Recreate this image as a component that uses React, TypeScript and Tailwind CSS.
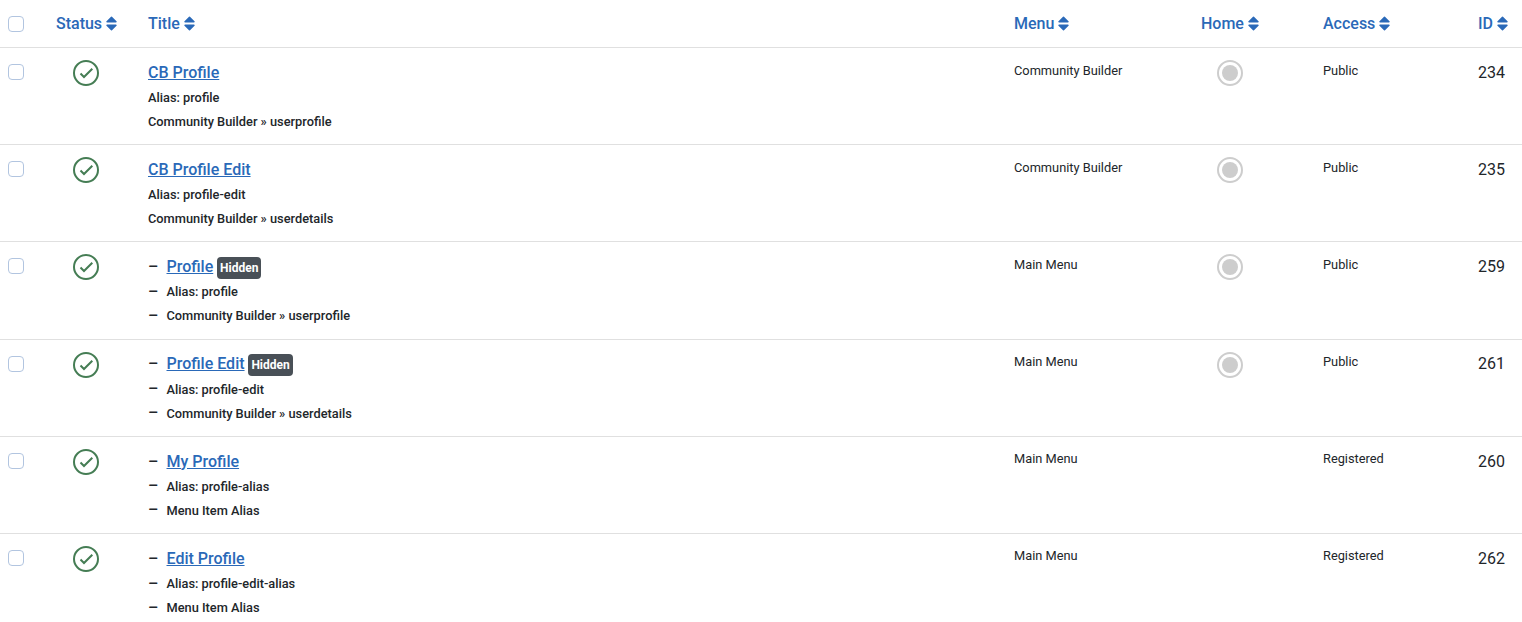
const rows = [
  { id: 234, title: "CB Profile", alias: "profile", type: "Community Builder » userprofile", menu: "Community Builder", access: "Public", home: true, child: false, hidden: false },
  { id: 235, title: "CB Profile Edit", alias: "profile-edit", type: "Community Builder » userdetails", menu: "Community Builder", access: "Public", home: true, child: false, hidden: false },
  { id: 259, title: "Profile", alias: "profile", type: "Community Builder » userprofile", menu: "Main Menu", access: "Public", home: true, child: true, hidden: true },
  { id: 261, title: "Profile Edit", alias: "profile-edit", type: "Community Builder » userdetails", menu: "Main Menu", access: "Public", home: true, child: true, hidden: true },
  { id: 260, title: "My Profile", alias: "profile-alias", type: "Menu Item Alias", menu: "Main Menu", access: "Registered", home: false, child: true, hidden: false },
  { id: 262, title: "Edit Profile", alias: "profile-edit-alias", type: "Menu Item Alias", menu: "Main Menu", access: "Registered", home: false, child: true, hidden: false },
];

function SortIcon() {
  return (
    <svg viewBox="0 0 11 15" className="ml-[4px] inline-block h-[15px] w-[11px] align-[-2px]" fill="#2a69b8">
      <path d="M1 6.5h9a.7.7 0 0 0 .5-1.2L6 .8a.7.7 0 0 0-1 0L.5 5.3A.7.7 0 0 0 1 6.5z" />
      <path d="M1 8.5h9a.7.7 0 0 1 .5 1.2L6 14.2a.7.7 0 0 1-1 0L.5 9.7A.7.7 0 0 1 1 8.5z" />
    </svg>
  );
}

function Checkbox() {
  return <div className="h-4 w-4 rounded-[4px] border border-[#b2c5e0] bg-white" />;
}

function StatusIcon() {
  return (
    <svg viewBox="0 0 26 26" className="h-[26px] w-[26px]" fill="none" stroke="#457d54">
      <circle cx="13" cy="13" r="12" strokeWidth="2" />
      <path d="M7.5 13.5L11 17l8.3-8.3" strokeWidth="2" />
    </svg>
  );
}

function HomeIcon() {
  return (
    <div className="flex h-[26px] w-[26px] items-center justify-center rounded-full border-2 border-[#cdcdcd]">
      <div className="h-4 w-4 rounded-full bg-[#cdcdcd]" />
    </div>
  );
}

function Dash() {
  return <span className="inline-block w-[18.5px] text-base leading-none font-medium">–</span>;
}

function Header({ label, className }: { label: string; className?: string }) {
  return (
    <th className={`h-[48px] border-b border-[#e0e0e0] px-2 text-left align-middle text-base font-medium text-[#2a69b8] ${className ?? ""}`}>
      {label}
      <SortIcon />
    </th>
  );
}

export default function App() {
  return (
    <div className="bg-white font-['Roboto',sans-serif] text-[#22262a]">
      <table className="w-full table-fixed border-separate border-spacing-0">
        <thead>
          <tr>
            <th className="w-[48px] border-b border-[#e0e0e0] pl-2 text-left align-middle">
              <Checkbox />
            </th>
            <Header label="Status" className="w-[92px]" />
            <Header label="Title" className="w-[866px]" />
            <Header label="Menu" className="w-[187px]" />
            <Header label="Home" className="w-[122px]" />
            <Header label="Access" className="w-[130px]" />
            <Header label="ID" className="pr-[14px] text-right" />
          </tr>
        </thead>
        <tbody>
          {rows.map((r, i) => {
            const line = i < rows.length - 1 ? "border-b border-[#e0e0e0]" : "";
            return (
              <tr key={r.id}>
                <td className={`pl-2 pt-4 align-top ${line}`}>
                  <Checkbox />
                </td>
                <td className={`px-2 pt-3 align-top ${line}`}>
                  <div className="w-[60px]">
                    <div className="mx-auto w-[26px]">
                      <StatusIcon />
                    </div>
                  </div>
                </td>
                <td className={`px-2 pt-3 align-top ${line}`}>
                  <div className="h-[84.1875px] pt-[0.8px]">
                    <div className="mb-[0.8px] flex h-6 items-center text-base font-medium">
                      {r.child && <Dash />}
                      <a className="text-[#2a69b8] underline">{r.title}</a>
                      {r.hidden && (
                        <span className="mt-[2px] ml-[3.85px] flex h-[22px] items-center rounded-[4px] bg-[#495057] px-[3px] text-xs font-bold text-white">Hidden</span>
                      )}
                    </div>
                    <div className="flex h-6 items-center text-[12.8px] font-medium">
                      {r.child && <Dash />}
                      Alias: {r.alias}
                    </div>
                    <div className="flex h-6 items-center text-[12.8px] font-medium">
                      {r.child && <Dash />}
                      {r.type}
                    </div>
                  </div>
                </td>
                <td className={`px-2 pt-[10.5px] align-top text-[12.8px] leading-[24px] ${line}`}>{r.menu}</td>
                <td className={`px-2 pt-3 align-top ${line}`}>
                  {r.home && (
                    <div className="ml-[16px]">
                      <HomeIcon />
                    </div>
                  )}
                </td>
                <td className={`px-2 pt-[10.5px] align-top text-[12.8px] leading-[24px] ${line}`}>{r.access}</td>
                <td className={`px-2 pt-[12.8px] pr-[17px] text-right align-top text-base leading-[24px] ${line}`}>{r.id}</td>
              </tr>
            );
          })}
        </tbody>
      </table>
    </div>
  );
}
